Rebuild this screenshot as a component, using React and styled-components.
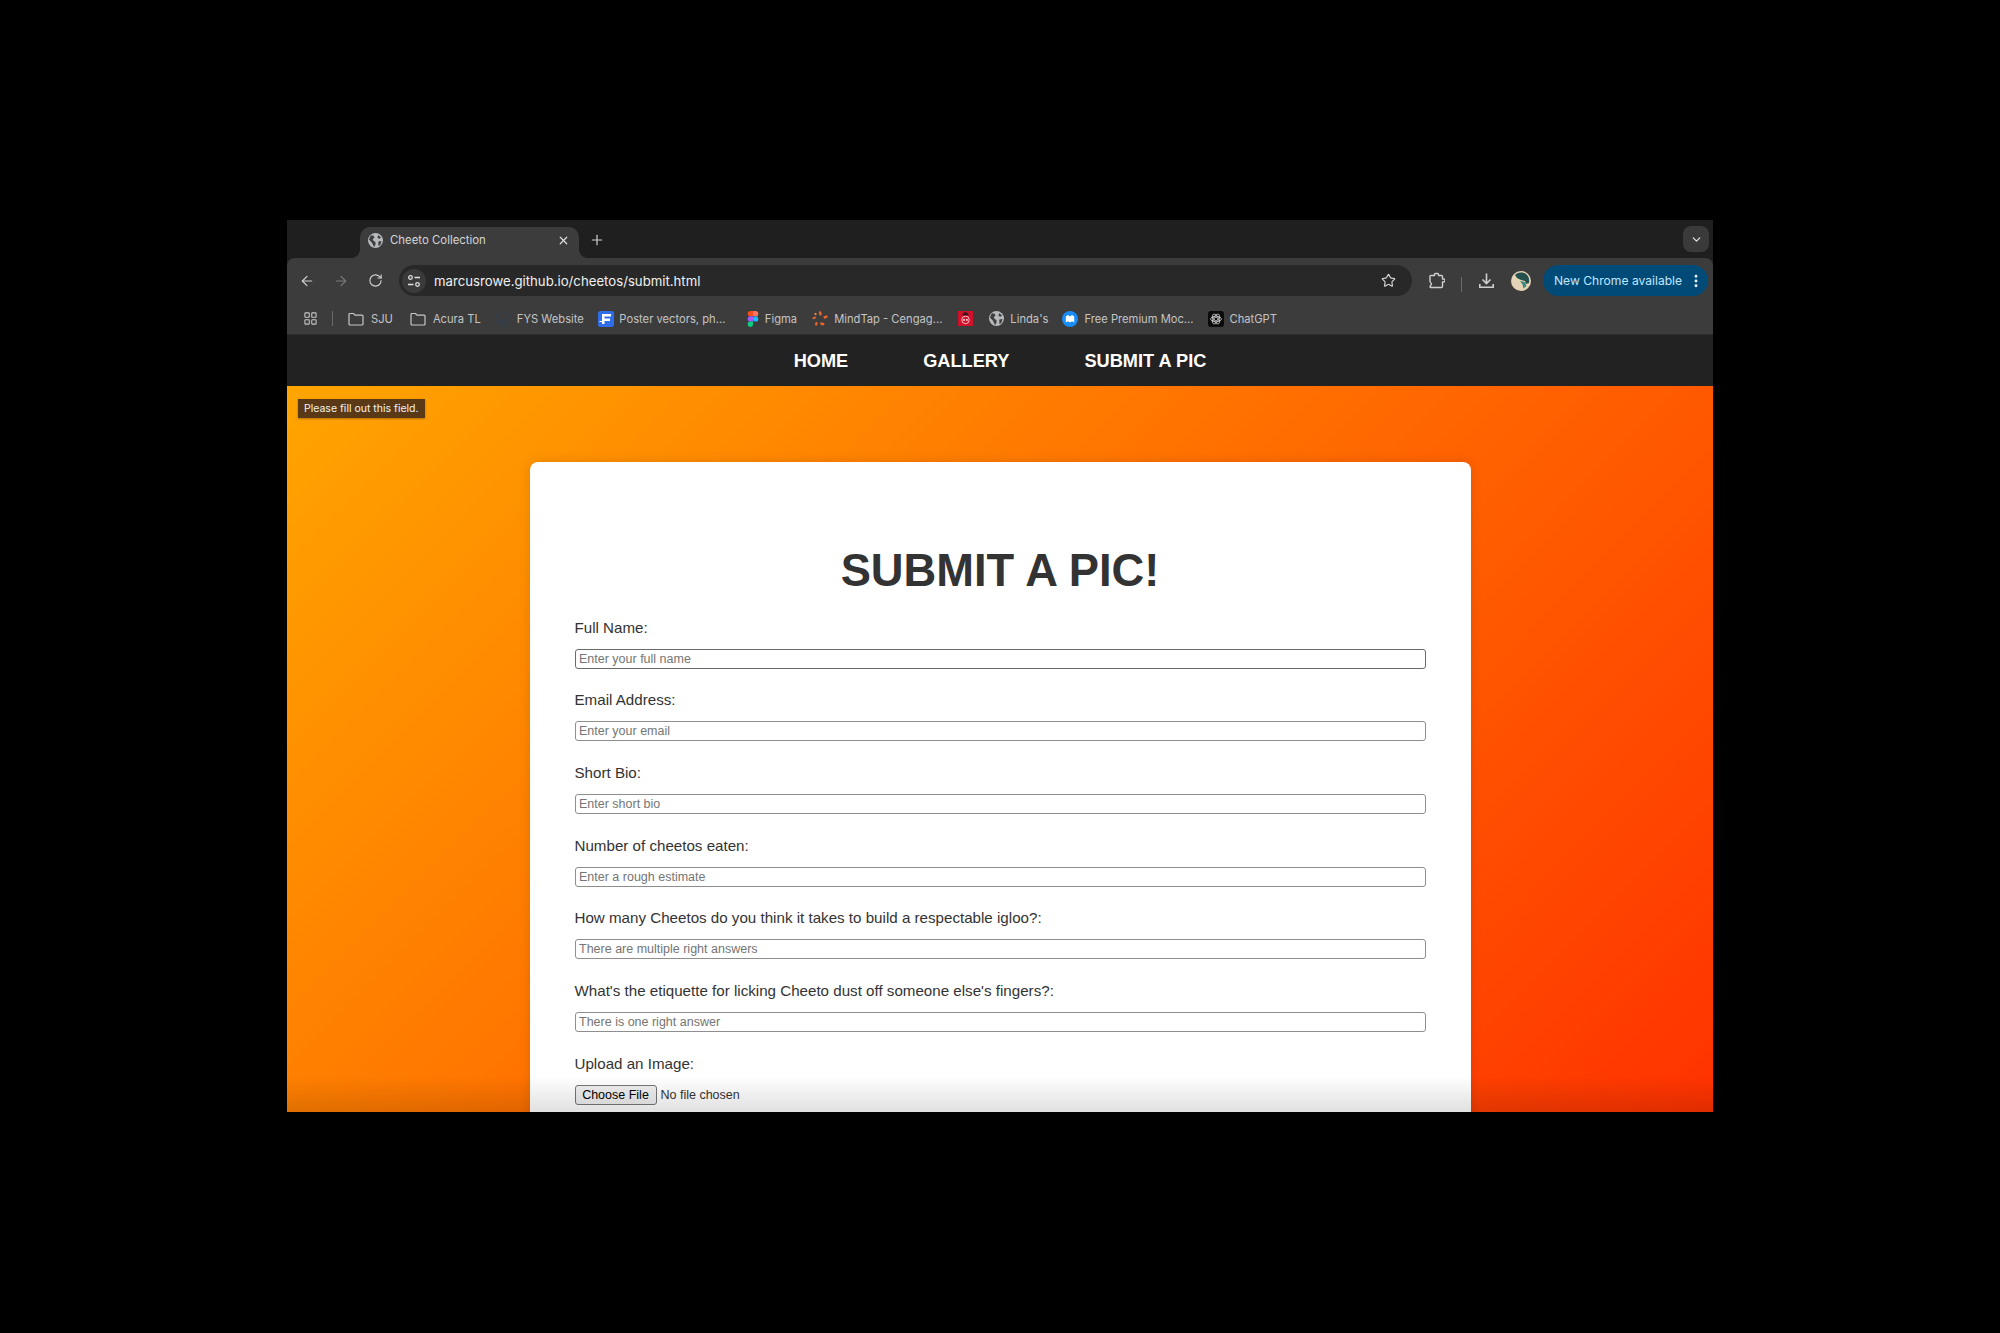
import React from 'react';
import styled, { createGlobalStyle } from 'styled-components';
import { ArrowLeft, ArrowRight, RotateCw, X, Plus, ChevronDown, Star, EllipsisVertical, LayoutGrid } from 'lucide-react';

const GlobalStyle = createGlobalStyle`
  html, body {
    margin: 0;
    background: #000;
  }
  * {
    box-sizing: border-box;
  }
`;

const chromeFont = `Inter, "Liberation Sans", Arial, sans-serif`;
const pageFont = `"Liberation Sans", Arial, sans-serif`;

const FIELDS = [
  ['Full Name:', 'Enter your full name'],
  ['Email Address:', 'Enter your email'],
  ['Short Bio:', 'Enter short bio'],
  ['Number of cheetos eaten:', 'Enter a rough estimate'],
  ['How many Cheetos do you think it takes to build a respectable igloo?:', 'There are multiple right answers'],
  ["What's the etiquette for licking Cheeto dust off someone else's fingers?:", 'There is one right answer'],
];

const FolderIcon = () => (
  <svg width="16" height="14" viewBox="0 0 16 14" fill="none" stroke="#c7c7c7" strokeWidth="1.200">
    <path d="M1 2.500a1 1 0 0 1 1-1h3.600l1.500 1.700H14a1 1 0 0 1 1 1V12a1 1 0 0 1-1 1H2a1 1 0 0 1-1-1z" />
  </svg>
);

const WordpressDim = () => (
  <svg width="16" height="16" viewBox="0 0 16 16" fill="none" stroke="#34404b" strokeWidth="1.200">
    <circle cx="8" cy="8" r="7" />
    <path d="M3.500 5l3 8 1.500-5 2 5 2.500-8" />
  </svg>
);

const Freepik = () => (
  <svg width="16" height="16" viewBox="0 0 16 16">
    <rect width="16" height="16" rx="2.500" fill="#2f6ee8" />
    <path d="M4 3h9v2.500H6.500v2H12V10H6.500v3H4z" fill="#fff" />
    <path d="M1.500 10.500H5" stroke="#fff" strokeWidth="1" />
  </svg>
);

const Figma = () => (
  <svg width="12" height="16" viewBox="0 0 13.200 20">
    <path d="M3.300 0h3.300v6.600H3.300a3.300 3.300 0 0 1 0-6.600z" fill="#f24e1e" />
    <path d="M6.600 0h3.300a3.300 3.300 0 0 1 0 6.600H6.600z" fill="#ff7262" />
    <path d="M3.300 6.600h3.300v6.600H3.300a3.300 3.300 0 0 1 0-6.600z" fill="#a259ff" />
    <circle cx="9.900" cy="9.900" r="3.300" fill="#1abcfe" />
    <path d="M3.300 13.200h3.300v3.400a3.300 3.300 0 1 1-3.300-3.400z" fill="#0acf83" />
  </svg>
);

const MindTap = () => (
  <svg width="16" height="16" viewBox="0 0 16 16" fill="#e9642a">
    <rect x="7" y="0.500" width="2.500" height="4" rx="0.500" transform="rotate(-10 8 2)" />
    <rect x="11.500" y="5" width="4" height="2.500" rx="0.500" transform="rotate(-25 13 6)" />
    <rect x="0.500" y="6" width="3.500" height="2" rx="0.500" transform="rotate(-25 2 7)" />
    <rect x="2.500" y="2" width="2" height="2" rx="0.500" fill="#f08a3c" />
    <rect x="3.500" y="11" width="2.200" height="3.500" rx="0.500" transform="rotate(20 4 12)" />
    <rect x="8.500" y="11.500" width="4" height="2.500" rx="0.500" transform="rotate(15 10 12)" />
  </svg>
);

const RedBadge = () => (
  <svg width="15" height="15" viewBox="0 0 16 16">
    <rect width="16" height="16" fill="#d0112b" />
    <path d="M5 3l3-2 3 2v1.500H5z" fill="#2a1a1e" />
    <circle cx="8" cy="9.500" r="4" fill="none" stroke="#f4c6cc" strokeWidth="1" />
    <path d="M5.500 8.500h2v2h-2zM8.500 8.500h2v2h-2z" fill="#f4c6cc" />
  </svg>
);

const Mockup = () => (
  <svg width="16" height="16" viewBox="0 0 16 16">
    <circle cx="8" cy="8" r="8" fill="#1a8cf5" />
    <path d="M3.800 11.500V5.500L6 4l2 1.500L10 4l2.200 1.500v6l-2-1.200-2.200 1.200-2.200-1.200z" fill="#fff" />
  </svg>
);

const ChatGpt = () => (
  <svg width="16" height="16" viewBox="0 0 16 16">
    <rect width="16" height="16" rx="3" fill="#0b0b0b" />
    <g fill="none" stroke="#cfcfcf" strokeWidth="0.800">
      <circle cx="8" cy="8" r="1.800" />
      <ellipse cx="8" cy="8" rx="5.400" ry="2.800" />
      <ellipse cx="8" cy="8" rx="5.400" ry="2.800" transform="rotate(60 8 8)" />
      <ellipse cx="8" cy="8" rx="5.400" ry="2.800" transform="rotate(120 8 8)" />
    </g>
  </svg>
);

const GlobeSolid = () => (
  <svg width="15" height="15" viewBox="0 0 16 16">
    <circle cx="8" cy="8" r="8" fill="#b6babd" />
    <path d="M3 2.500l3 .500 1 2-2 1.500 1 2 2 1v3L6.500 15 4 10 1 7zM11 2l3 3-2 1-2-1zM11 9l3.500-.500L13 13l-2 .500z" fill="#3f3f3f" />
  </svg>
);

const SiteInfoIcon = () => (
  <svg width="14" height="14" viewBox="0 0 14 14" fill="none" stroke="#dedede" strokeWidth="1.300">
    <circle cx="3.500" cy="3.500" r="1.800" />
    <path d="M7.500 3.500H13M1 10.500h5.500" />
    <circle cx="10.500" cy="10.500" r="1.800" />
  </svg>
);

const ExtensionIcon = () => (
  <svg width="17" height="17" viewBox="0 0 17 17" fill="none" stroke="#cfcfcf" strokeWidth="1.400" strokeLinejoin="round">
    <path d="M3.500 3.500H6.500V2.500a1 1 0 0 1 1-1h2a1 1 0 0 1 1 1v1h3a1 1 0 0 1 1 1V7h1a1 1 0 0 1 0 3h-1v4.500a1 1 0 0 1-1 1H3a1 1 0 0 1-1-.900l1.500-2.600L2 9.500V4.500a1 1 0 0 1 1.500-1z" />
  </svg>
);

const DownloadIcon = () => (
  <svg width="17" height="17" viewBox="0 0 17 17" fill="none" stroke="#cfcfcf" strokeWidth="1.600">
    <path d="M8.500 1.500v9.500M4.500 7.500l4 4 4-4M1.800 12v3.200h13.400V12" />
  </svg>
);

const Avatar = () => (
  <svg width="20" height="20" viewBox="0 0 20 20">
    <circle cx="10" cy="10" r="10" fill="#e4d3b4" />
    <path d="M4 4c3-3.500 9-3 11-1 3 2 3.500 6 3 9l-3 1-1-3-4-1-4-2z" fill="#24504e" />
    <path d="M9 10l5 1 1.500 4-3 2.500-1-4z" fill="#3d8a7c" />
  </svg>
);

const BOOKMARKS = [
  { icon: <FolderIcon />, name: 'SJU', gap: 17, textGap: 7 },
  { icon: <FolderIcon />, name: 'Acura TL', gap: 14, textGap: 7 },
  { icon: <WordpressDim />, name: 'FYS Website', gap: 14.500 },
  { icon: <Freepik />, name: 'Poster vectors, ph...', gap: 21.500, textGap: 5 },
  { icon: <Figma />, name: 'Figma', gap: 15 },
  { icon: <MindTap />, name: 'MindTap - Cengag...', gap: 16 },
  { icon: <RedBadge />, name: '', gap: 16 },
  { icon: <GlobeSolid />, name: "Linda's", gap: 14 },
  { icon: <Mockup />, name: 'Free Premium Moc...', gap: 14 },
  { icon: <ChatGpt />, name: 'ChatGPT', gap: 0 },
];

const Window = styled.div`
  position: relative;
  width: 1426px;
  height: 892px;
  margin: 220px 0 221px 287px;
  overflow: hidden;
  display: flex;
  flex-direction: column;
  background: #202020;
`;

const TabStrip = styled.div`
  height: 38px;
  flex: none;
  display: flex;
  align-items: flex-end;
  padding-left: 73px;
  background: #1f1f1f;
`;

const Tab = styled.div`
  position: relative;
  width: 219px;
  height: 31px;
  display: flex;
  align-items: center;
  gap: 7px;
  padding: 0 9px 5px 8px;
  border-radius: 10px 10px 0 0;
  background: #3c3c3c;
  color: #d6d6d6;
  font: 11.400px ${chromeFont};

  &::before,
  &::after {
    content: '';
    position: absolute;
    bottom: 0;
    width: 8px;
    height: 8px;
  }
  &::before {
    left: -8px;
    background: radial-gradient(circle at 0 0, transparent 7.500px, #3c3c3c 8px);
  }
  &::after {
    right: -8px;
    background: radial-gradient(circle at 100% 0, transparent 7.500px, #3c3c3c 8px);
  }
`;

const TabTitle = styled.span`
  flex: 1;
`;

const NewTab = styled.div`
  margin: 0 0 10px 10px;
  color: #cfcfcf;
  display: flex;
`;

const TabMenu = styled.div`
  width: 26px;
  height: 26px;
  margin: 0 4px 6px auto;
  display: flex;
  align-items: center;
  justify-content: center;
  border-radius: 8px;
  background: #3a3a3a;
  color: #e0e0e0;
`;

const Toolbar = styled.div`
  height: 45px;
  flex: none;
  display: flex;
  align-items: flex-start;
  padding: 7px 4px 0 10px;
  background: #3c3c3c;
  border-radius: 8px 8px 0 0;
`;

const NavIcon = styled.div`
  width: 20px;
  height: 31px;
  display: flex;
  align-items: center;
  justify-content: center;
  margin-right: ${(p) => p.$mr || 14}px;
  color: ${(p) => (p.$dim ? '#7a7a7a' : '#cfcfcf')};
`;

const AddressBar = styled.div`
  width: 1013px;
  height: 31px;
  flex: none;
  display: flex;
  align-items: center;
  padding-left: 3px;
  border-radius: 16px;
  background: #282828;
  color: #f0f0f0;
  font: 13.200px ${chromeFont};
`;

const SiteInfo = styled.div`
  width: 24px;
  height: 24px;
  margin-right: 8px;
  display: flex;
  align-items: center;
  justify-content: center;
  border-radius: 50%;
  background: #3a3a3a;
`;

const Url = styled.span`
  flex: 1;
`;

const StarWrap = styled.div`
  display: flex;
  margin-right: 16px;
  color: #d8d8d8;
`;

const ToolIcon = styled.div`
  height: 31px;
  display: flex;
  align-items: center;
  margin-left: ${(p) => p.$ml}px;
`;

const Divider = styled.div`
  width: 1px;
  height: 15px;
  align-self: center;
  margin-left: ${(p) => p.$ml}px;
  margin-right: ${(p) => p.$mr || 0}px;
  background: #6a6a6a;
`;

const UpdatePill = styled.div`
  width: 165px;
  height: 31px;
  margin-left: 12px;
  display: flex;
  align-items: center;
  justify-content: space-between;
  padding: 0 4px 0 11px;
  border-radius: 16px;
  background: #004a77;
  color: #c2e7ff;
  font: 12.100px ${chromeFont};
`;

const BookmarkBar = styled.div`
  height: 32px;
  flex: none;
  display: flex;
  align-items: center;
  padding: 0 0 0 16px;
  background: #3c3c3c;
  border-bottom: 1px solid #2e2e2e;
  color: #c4c4c4;
  font: 11.200px ${chromeFont};
`;

const AppsIcon = styled.div`
  display: flex;
  color: #c7c7c7;
`;

const Bookmark = styled.div`
  display: flex;
  align-items: center;
  gap: ${(p) => p.$textGap || 6}px;
  margin-right: ${(p) => p.$gap}px;
  white-space: nowrap;
`;

const SiteNav = styled.nav`
  height: 51px;
  flex: none;
  display: flex;
  align-items: center;
  justify-content: center;
  gap: 75px;
  padding-top: 1px;
  background: #222;
  color: #fff;
  font: bold 18.200px ${pageFont};
`;

const Page = styled.main`
  position: relative;
  flex: 1;
  min-height: 0;
  display: flex;
  align-items: flex-start;
  justify-content: center;
  padding-top: 76px;
  background: linear-gradient(135deg, #ffa500 0%, #ff3200 100%);
  font-family: ${pageFont};
`;

const Tooltip = styled.div`
  position: absolute;
  top: 13px;
  left: 11px;
  height: 19px;
  padding: 0 6px;
  display: flex;
  align-items: center;
  background: #5a3a16;
  color: #f3f3f3;
  font: 10.500px ${chromeFont};
  box-shadow: 0 1px 2px rgba(0, 0, 0, 0.3);
`;

const Card = styled.form`
  width: 941px;
  flex: none;
  padding: 83px 45px 40px;
  border-radius: 8px;
  background: #fff;
  box-shadow: 0 0 12px rgba(0, 0, 0, 0.12);
`;

const Title = styled.h1`
  margin: 0;
  text-align: center;
  color: #333;
  font-size: 45.300px;
  line-height: 51px;
  font-weight: bold;
`;

const Fields = styled.div`
  display: flex;
  flex-direction: column;
  gap: 22.700px;
  margin-top: 22.500px;
`;

const Field = styled.div`
  display: flex;
  flex-direction: column;
  gap: 13px;
`;

const Label = styled.label`
  color: #333;
  font-size: 15.150px;
  line-height: 17px;
`;

const TextInput = styled.input`
  width: 100%;
  height: 20px;
  padding: 0 3.500px;
  border: 1.500px solid ${(p) => (p.$focused ? '#6a6a6a' : '#8e8e8e')};
  border-radius: 3px;
  background: #fff;
  font: 12.500px ${pageFont};
  outline: none;

  &::placeholder {
    color: #757575;
  }
`;

const FileRow = styled.div`
  display: flex;
  align-items: center;
  gap: 4px;
  color: #333;
  font-size: 12.500px;
`;

const FileButton = styled.button`
  width: 82px;
  height: 20px;
  padding: 0;
  border: 1px solid #767676;
  border-radius: 3px;
  background: #efefef;
  color: #000;
  font: 12.500px ${pageFont};
`;

const BottomFade = styled.div`
  position: absolute;
  left: 0;
  right: 0;
  bottom: 0;
  height: 36px;
  background: linear-gradient(to bottom, rgba(0, 0, 0, 0), rgba(0, 0, 0, 0.12));
  pointer-events: none;
`;

const App = () => {
  return (
    <>
      <GlobalStyle />
      <Window>
        <TabStrip>
          <Tab>
            <GlobeSolid />
            <TabTitle>Cheeto Collection</TabTitle>
            <X size={13} strokeWidth={2.200} color="#e0e0e0" />
          </Tab>
          <NewTab>
            <Plus size={16} strokeWidth={1.800} />
          </NewTab>
          <TabMenu>
            <ChevronDown size={13} strokeWidth={2.400} />
          </TabMenu>
        </TabStrip>

        <Toolbar>
          <NavIcon>
            <ArrowLeft size={16} strokeWidth={1.800} />
          </NavIcon>
          <NavIcon $dim>
            <ArrowRight size={16} strokeWidth={1.800} />
          </NavIcon>
          <NavIcon $mr={14}>
            <RotateCw size={15} strokeWidth={1.800} />
          </NavIcon>
          <AddressBar>
            <SiteInfo>
              <SiteInfoIcon />
            </SiteInfo>
            <Url>marcusrowe.github.io/cheetos/submit.html</Url>
            <StarWrap>
              <Star size={15} strokeWidth={1.800} />
            </StarWrap>
          </AddressBar>
          <ToolIcon $ml={16}>
            <ExtensionIcon />
          </ToolIcon>
          <Divider $ml={16} />
          <ToolIcon $ml={16}>
            <DownloadIcon />
          </ToolIcon>
          <ToolIcon $ml={16}>
            <Avatar />
          </ToolIcon>
          <UpdatePill>
            New Chrome available
            <EllipsisVertical size={16} strokeWidth={2.400} color="#e6f3ff" />
          </UpdatePill>
        </Toolbar>

        <BookmarkBar>
          <AppsIcon>
            <LayoutGrid size={15} strokeWidth={1.700} />
          </AppsIcon>
          <Divider $ml={14} $mr={15} />
          {BOOKMARKS.map((b, i) => (
            <Bookmark key={i} $gap={b.gap} $textGap={b.textGap}>
              {b.icon}
              {b.name && <span>{b.name}</span>}
            </Bookmark>
          ))}
        </BookmarkBar>

        <SiteNav>
          <span>HOME</span>
          <span>GALLERY</span>
          <span>SUBMIT A PIC</span>
        </SiteNav>

        <Page>
          <Tooltip>Please fill out this field.</Tooltip>
          <Card>
            <Title>SUBMIT A PIC!</Title>
            <Fields>
              {FIELDS.map(([label, placeholder], i) => (
                <Field key={label}>
                  <Label>{label}</Label>
                  <TextInput placeholder={placeholder} $focused={i === 0} />
                </Field>
              ))}
              <Field>
                <Label>Upload an Image:</Label>
                <FileRow>
                  <FileButton type="button">Choose File</FileButton>
                  No file chosen
                </FileRow>
              </Field>
            </Fields>
          </Card>
          <BottomFade />
        </Page>
      </Window>
    </>
  );
};

export default App;
